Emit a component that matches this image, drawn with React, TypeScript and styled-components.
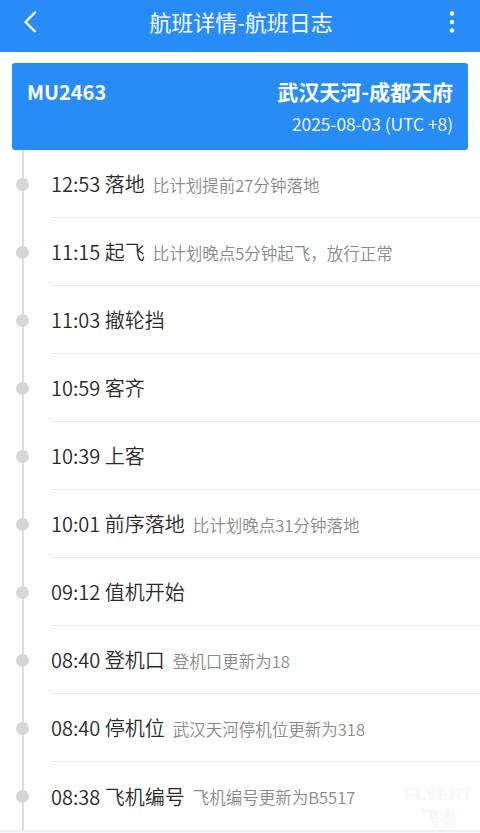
import React from 'react';
import styled, { createGlobalStyle } from 'styled-components';

const GlobalStyle = createGlobalStyle`
  html, body {
    margin: 0;
    padding: 0;
    background: #f6f7f9;
  }
  body {
    font-family: "Noto Sans CJK SC", "Noto Sans", sans-serif;
    color: #333;
  }
`;

const Page = styled.div`
  width: 480px;
  min-height: 833px;
  background: #f6f7f9;
  position: relative;
  overflow: hidden;
`;

const Header = styled.header`
  height: 52px;
  background: #278cf8;
  display: flex;
  align-items: flex-start;
  justify-content: space-between;
  padding: 0 14px 0 16px;
  box-sizing: border-box;
`;

const HeaderTitle = styled.h1`
  margin: 0;
  flex: 1;
  text-align: center;
  color: #fff;
  font-size: 22px;
  font-weight: 400;
  line-height: 42px;
`;

const IconSlot = styled.div`
  width: 28px;
  height: 44px;
  display: flex;
  align-items: center;
  justify-content: center;
`;

const Body = styled.div`
  background: #fff;
  padding-top: 11px;
  border-bottom: 2px solid #eceef1;
`;

const FlightCard = styled.section`
  margin: 0 12px;
  height: 87px;
  background: #288cf7;
  border-radius: 3px;
  color: #fff;
  padding: 13px 15px 0 15px;
  box-sizing: border-box;
  display: flex;
  flex-direction: column;
`;

const CardTop = styled.div`
  display: flex;
  justify-content: space-between;
  align-items: center;
  height: 30px;
`;

const FlightNo = styled.span`
  font-size: 20px;
  font-weight: 700;
`;

const Route = styled.span`
  font-size: 21px;
  font-weight: 700;
`;

const DateLine = styled.div`
  margin-top: 6px;
  text-align: right;
  font-size: 17.5px;
  font-weight: 350;
  line-height: 24px;
`;

const Timeline = styled.ul`
  list-style: none;
  margin: 0;
  padding: 0;
`;

const Row = styled.li`
  display: flex;
  height: 68px;
`;

const Rail = styled.div`
  width: 51px;
  flex-shrink: 0;
  display: flex;
  align-items: center;
  background: linear-gradient(#dcdde1, #dcdde1) no-repeat 22px 0 / 2px 100%;
`;

const Dot = styled.span`
  width: 13px;
  height: 13px;
  margin-left: 16px;
  border-radius: 50%;
  background: #d6d7dc;
`;

const Content = styled.div<{ $last?: boolean }>`
  flex: 1;
  display: flex;
  align-items: center;
  border-bottom: ${({ $last }) => ($last ? 'none' : '1px solid #ebebeb')};
  white-space: nowrap;
`;

const Event = styled.span`
  font-size: 20px;
  font-weight: 350;
  color: #2a2a2a;
`;

const Note = styled.span`
  margin-left: 8px;
  font-size: 16.5px;
  font-weight: 350;
  color: #888;
  position: relative;
  top: 1px;
`;

const Watermark = styled.div`
  position: absolute;
  right: 6px;
  bottom: 6px;
  display: flex;
  flex-direction: column;
  align-items: center;
  color: rgba(255, 255, 255, 0.9);
  text-shadow: 0 0 1px rgba(0, 0, 0, 0.15);
  pointer-events: none;
`;

const WmTop = styled.span`
  font-family: "Liberation Sans", sans-serif;
  font-size: 17px;
  letter-spacing: 1px;
  line-height: 20px;
`;

const WmBottom = styled.span`
  font-size: 18px;
  font-weight: 700;
  line-height: 22px;
`;

const events = [
  { time: '12:53', title: '落地', note: '比计划提前27分钟落地' },
  { time: '11:15', title: '起飞', note: '比计划晚点5分钟起飞，放行正常' },
  { time: '11:03', title: '撤轮挡', note: '' },
  { time: '10:59', title: '客齐', note: '' },
  { time: '10:39', title: '上客', note: '' },
  { time: '10:01', title: '前序落地', note: '比计划晚点31分钟落地' },
  { time: '09:12', title: '值机开始', note: '' },
  { time: '08:40', title: '登机口', note: '登机口更新为18' },
  { time: '08:40', title: '停机位', note: '武汉天河停机位更新为318' },
  { time: '08:38', title: '飞机编号', note: '飞机编号更新为B5517' },
];

export default function App() {
  return (
    <>
      <GlobalStyle />
      <Page>
        <Header>
          <IconSlot>
            <svg width="16" height="22" viewBox="0 0 16 22" fill="none">
              <path d="M13 1.5 L3.5 11 L13 20.5" stroke="#fff" strokeWidth="2.2" strokeLinecap="round" strokeLinejoin="round" />
            </svg>
          </IconSlot>
          <HeaderTitle>航班详情-航班日志</HeaderTitle>
          <IconSlot>
            <svg width="6" height="24" viewBox="0 0 6 24">
              <circle cx="3" cy="3.5" r="2.2" fill="#fff" />
              <circle cx="3" cy="12" r="2.2" fill="#fff" />
              <circle cx="3" cy="20.5" r="2.2" fill="#fff" />
            </svg>
          </IconSlot>
        </Header>
        <Body>
          <FlightCard>
            <CardTop>
              <FlightNo>MU2463</FlightNo>
              <Route>武汉天河-成都天府</Route>
            </CardTop>
            <DateLine>2025-08-03 (UTC +8)</DateLine>
          </FlightCard>
          <Timeline>
            {events.map((e, i) => (
              <Row key={i}>
                <Rail>
                  <Dot />
                </Rail>
                <Content $last={i === events.length - 1}>
                  <Event>
                    {e.time} {e.title}
                  </Event>
                  {e.note && <Note>{e.note}</Note>}
                </Content>
              </Row>
            ))}
          </Timeline>
        </Body>
        <Watermark>
          <WmTop>FLYERT</WmTop>
          <WmBottom>飞客</WmBottom>
        </Watermark>
      </Page>
    </>
  );
}
